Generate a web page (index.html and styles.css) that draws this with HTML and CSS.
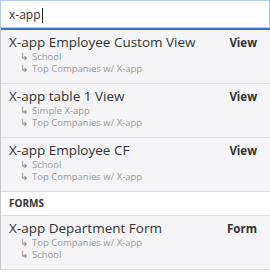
FILE: index.html
```html
<!doctype html>
<html lang="en">
  <head>
    <meta charset="UTF-8" />
    <title>Search</title>
    <link rel="stylesheet" href="styles.css">
  </head>
  <body>
    <div class="search">
      <div class="search-input">x-app<span class="caret"></span></div>
      <div class="results">
        <div class="result">
          <div class="result-main">
            <div class="result-title">X-app Employee Custom View</div>
            <div class="result-sub">School</div>
            <div class="result-sub">Top Companies w/ X-app</div>
          </div>
          <div class="result-type">View</div>
        </div>
        <div class="result">
          <div class="result-main">
            <div class="result-title">X-app table 1 View</div>
            <div class="result-sub">Simple X-app</div>
            <div class="result-sub">Top Companies w/ X-app</div>
          </div>
          <div class="result-type">View</div>
        </div>
        <div class="result">
          <div class="result-main">
            <div class="result-title">X-app Employee CF</div>
            <div class="result-sub">School</div>
            <div class="result-sub">Top Companies w/ X-app</div>
          </div>
          <div class="result-type">View</div>
        </div>
        <div class="group-head">Forms</div>
        <div class="result">
          <div class="result-main">
            <div class="result-title">X-app Department Form</div>
            <div class="result-sub">Top Companies w/ X-app</div>
            <div class="result-sub">School</div>
          </div>
          <div class="result-type">Form</div>
        </div>
      </div>
    </div>
  </body>
</html>
```

FILE: styles.css
```css
body {
  margin: 0;
  font-family: "Open Sans", sans-serif;
  background-color: #ffffff;
  color: #333333;
}
.search {
  width: 270px;
}
.search-input {
  height: 26px;
  border: 1px solid #b4c9ef;
  border-bottom: none;
  padding: 0 8px;
  font-size: 12px;
  line-height: 27px;
  color: #333333;
  background-color: #ffffff;
}
.caret {
  display: inline-block;
  width: 1px;
  height: 15px;
  margin-left: 1px;
  vertical-align: -4px;
  background-color: #222222;
}
.results {
  border-top: 1px solid #b4c9ef;
  box-shadow: inset 0 2px 0 #3b6fd4;
  padding-top: 2px;
  border-left: 1px solid #c8c8c8;
  background-color: #f5f5f7;
}
.result {
  display: flex;
  justify-content: space-between;
  padding: 4px 13px 8px 8px;
  border-bottom: 1px solid #dddddd;
}
.result-title {
  font-size: 13.5px;
  line-height: 17px;
  color: #333333;
}
.result-sub {
  font-size: 9.5px;
  line-height: 12px;
  color: #9a9a9a;
  padding-left: 11px;
}
.result-sub::before {
  content: "\21B3";
  display: inline-block;
  width: 12px;
  color: #8a8a8a;
}
.result-type {
  font-size: 11.5px;
  line-height: 18px;
  font-weight: 700;
  color: #333333;
}
.group-head {
  height: 23px;
  line-height: 23px;
  padding-left: 8px;
  font-size: 10px;
  font-weight: 700;
  text-transform: uppercase;
  color: #333333;
  background-color: #ffffff;
  border-bottom: 1px solid #dddddd;
}
```
